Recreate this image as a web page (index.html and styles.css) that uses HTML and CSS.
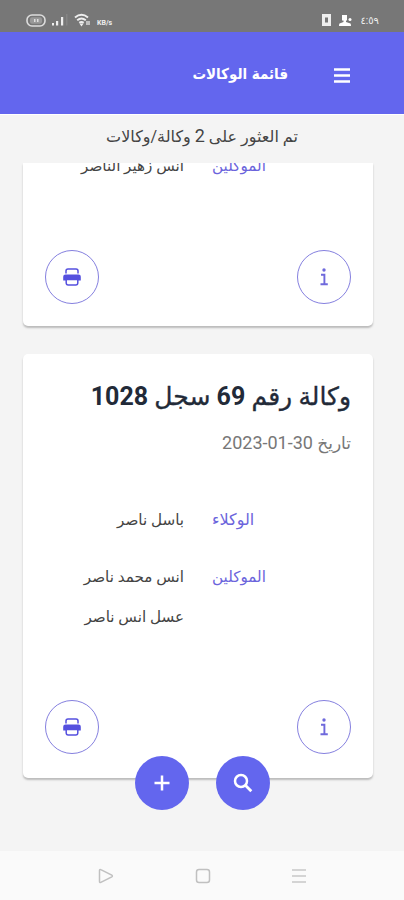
FILE: index.html
```html
<!DOCTYPE html>
<html lang="ar" dir="rtl">
<head>
<meta charset="utf-8">
<title>قائمة الوكالات</title>
<link rel="stylesheet" href="styles.css">
</head>
<body>
<svg class="defs" width="0" height="0" aria-hidden="true">
  <symbol id="printer" viewBox="0 0 18 18">
    <path d="M3 5.500V3Q3 1 5 1h8q2 0 2 2v2.500" fill="none" stroke="currentColor" stroke-width="1.500"/>
    <path d="M2.500 6.500h13q2.300 0 2.300 2.300V12.500H.2V8.800Q.2 6.500 2.500 6.500z" fill="currentColor"/>
    <path d="M3.200 11.500v3.200q0 2.300 2 2.300h7.600q2 0 2-2.300v-3.200z" fill="#fff" stroke="currentColor" stroke-width="1.500"/>
  </symbol>
  <symbol id="info" viewBox="0 0 10 18">
    <circle cx="5" cy="2" r="1.700" fill="currentColor"/>
    <path d="M2 6.800h3.400V16M1.500 16.200h7.300" fill="none" stroke="currentColor" stroke-width="1.900"/>
  </symbol>
</svg>
<div class="phone">
  <div class="status">
    <div class="status-group">
      <span class="clock">٤:٥٩</span>
      <svg width="13" height="13" viewBox="0 0 13 13" fill="#fff"><path d="M3 1h5v5.500H7V8l4.500 1.500q.5.500.5 2.500H0q0-2 .5-2.500L4.500 8V6.500H3z"/><circle cx="11" cy="5.500" r="1.500"/></svg>
      <svg width="9" height="12" viewBox="0 0 9 12"><path d="M0 0h9v12H0z" fill="#eee"/><path d="M3 3.500h3v5H3z" fill="#777"/></svg>
    </div>
    <div class="status-group status-left">
      <span class="speed">KB/s</span>
      <svg width="17" height="14" viewBox="0 0 17 14" fill="none" stroke="#eee" stroke-width="1.900"><path d="M1 4.500q6.500-5.500 13 0M3.200 7.200q4.300-3.500 8.600 0M5.300 9.800q2.200-1.800 4.400 0"/><path d="M6.500 11h2l-1 1.500zM13 8v4M15 8v4" stroke-width="1.200"/></svg>
      <svg class="signal" width="16" height="12" viewBox="0 0 16 12"><path d="M0 9h2v2.500H0zM4 7h2.200v4.500H4zM9 3h2.200v8.500H9z" fill="#eee"/><path d="M14 0h1.500v11.500H14z" fill="#858585"/></svg>
      <svg width="20" height="13" viewBox="0 0 20 13"><rect x="1" y="1" width="18" height="11" rx="5" fill="none" stroke="#ddd" stroke-width="1.600"/><rect x="4" y="3.300" width="12" height="6.400" rx="2" fill="#999"/><path d="M8 5h1.500v3H8zM11 5h1.500v3H11z" fill="#ddd"/></svg>
    </div>
  </div>
  <header class="appbar">
    <svg width="16" height="15" viewBox="0 0 16 15"><path d="M0 1.500h16M0 7.500h16M0 13.500h16" stroke="#fff" stroke-width="2.400"/></svg>
    <h1>قائمة الوكالات</h1>
  </header>
  <p class="found">تم العثور على <b>2</b> وكالة/وكالات</p>
  <main class="list">
    <article class="card card-cut">
      <dl class="people">
        <div class="row"><dt>الموكلين</dt><dd><span>انس زهير الناصر</span></dd></div>
      </dl>
      <div class="actions">
        <button class="round"><svg class="i-info"><use href="#info"/></svg></button>
        <button class="round"><svg class="i-print"><use href="#printer"/></svg></button>
      </div>
    </article>
    <article class="card">
      <h2>وكالة رقم <b>69</b> سجل <b>1028</b></h2>
      <p class="date">تاريخ <bdi>2023-01-30</bdi></p>
      <dl class="people">
        <div class="row"><dt class="wide">الوكلاء</dt><dd><span>باسل ناصر</span></dd></div>
        <div class="row"><dt>الموكلين</dt><dd><span>انس محمد ناصر</span><span>عسل انس ناصر</span></dd></div>
      </dl>
      <div class="actions">
        <button class="round"><svg class="i-info"><use href="#info"/></svg></button>
        <button class="round"><svg class="i-print"><use href="#printer"/></svg></button>
      </div>
    </article>
    <div class="fabs">
      <button class="fab"><svg width="20" height="20" viewBox="0 0 20 20" fill="none" stroke="#fff"><circle cx="8" cy="8" r="6" stroke-width="2.500"/><path d="M12.300 12.300l6 6" stroke-width="2.800"/></svg></button>
      <button class="fab"><svg width="16" height="16" viewBox="0 0 16 16"><path d="M8 .5v15M.5 8h15" stroke="#fff" stroke-width="2.500"/></svg></button>
    </div>
  </main>
  <nav class="sysnav">
    <svg width="16" height="16" viewBox="0 0 16 16"><path d="M1 2h14M1 8h14M1 14h14" stroke="#c8c8c8" stroke-width="1.500"/></svg>
    <svg width="16" height="16" viewBox="0 0 16 16"><rect x="1.500" y="1.500" width="13" height="13" rx="2.500" fill="none" stroke="#c0c0c0" stroke-width="1.500"/></svg>
    <svg width="16" height="16" viewBox="0 0 16 16"><path d="M1.500 2.500q0-1.500 1.300-.8l11 5.500q1.200.8 0 1.600l-11 5.500q-1.300.7-1.300-.8z" fill="none" stroke="#c0c0c0" stroke-width="1.500"/></svg>
  </nav>
</div>
</body>
</html>
```
FILE: styles.css
```css
* { box-sizing: border-box; margin: 0; padding: 0; }
body { font-family: Roboto, "DejaVu Sans", sans-serif; color: #444; background: #f4f4f4; }
.defs { position: absolute; }
.phone { width: 404px; height: 900px; display: flex; flex-direction: column; overflow: hidden; }
.status { height: 32px; flex: none; background: #777; display: flex; justify-content: space-between; padding: 8px 25px 0 26px; }
.status-group { display: flex; align-items: center; gap: 8px; height: 24px; }
.status-left { gap: 6px; }
.clock { font-size: 10px; color: #eee; }
.speed { font-size: 7px; line-height: 8px; padding-top: 5px; font-weight: 700; color: #eee; }
.appbar { height: 82px; flex: none; background: #6366ee; display: flex; align-items: center; gap: 46px; padding: 5px 54px 0 0; }
.appbar h1 { font-family: "DejaVu Sans Condensed", "DejaVu Sans", sans-serif; font-stretch: condensed; font-size: 15px; line-height: 24px; font-weight: 700; color: #fff; margin-top: -3px; }
.found { height: 49px; flex: none; border-top: 1px solid #fff; text-align: center; font-size: 16px; line-height: 44px; white-space: nowrap; }
.found b { font-size: 18px; line-height: 20px; font-weight: 400; }
.list { height: 688px; flex: none; position: relative; overflow: hidden; padding: 0 31px 0 23px; }
.card { width: 350px; height: 424px; background: #fff; border-radius: 5px; box-shadow: 0 2px 2px #bbb; padding: 21px 22px 24px; display: flex; flex-direction: column; }
.card-cut { height: 163px; margin-bottom: 28px; padding-top: 0; padding-bottom: 22px; border-radius: 0 0 5px 5px; }
h2 { font-size: 25px; line-height: 44px; font-weight: 500; color: #222a38; white-space: nowrap; -webkit-text-stroke: .35px #222a38; }
h2 b { font-weight: 700; -webkit-text-stroke: 0; }
.date { font-size: 17px; line-height: 24px; margin-top: 12px; color: #777; white-space: nowrap; }
.date bdi { font-size: 18px; }
.people { display: flex; flex-direction: column; gap: 17px; margin-top: 45px; font-size: 15.2px; line-height: 40px; }
.card-cut .people { margin-top: -17px; }
.row { display: flex; padding-right: 87px; }
dt { width: 52px; flex: none; direction: ltr; text-align: left; color: #6b64dc; white-space: nowrap; }
dt.wide { font-size: 16px; }
dd { margin-right: 28px; white-space: nowrap; }
dd span { display: block; }
.actions { margin-top: auto; display: flex; justify-content: space-between; }
.round { width: 54px; height: 54px; border: 1px solid #8580df; border-radius: 50%; background: #fff; color: #5550df; display: flex; align-items: center; justify-content: center; }
.i-info { width: 10px; height: 18px; color: #6f69dc; }
.i-print { width: 18px; height: 18px; }
.fabs { position: absolute; top: 593px; left: 135px; display: flex; gap: 27px; }
.fab { width: 54px; height: 54px; border: 0; border-radius: 50%; background: #6366ee; display: flex; align-items: center; justify-content: center; }
.sysnav { flex: 1; background: #fafafa; display: flex; justify-content: space-between; align-items: center; padding: 0 97px 0 98px; }
```
